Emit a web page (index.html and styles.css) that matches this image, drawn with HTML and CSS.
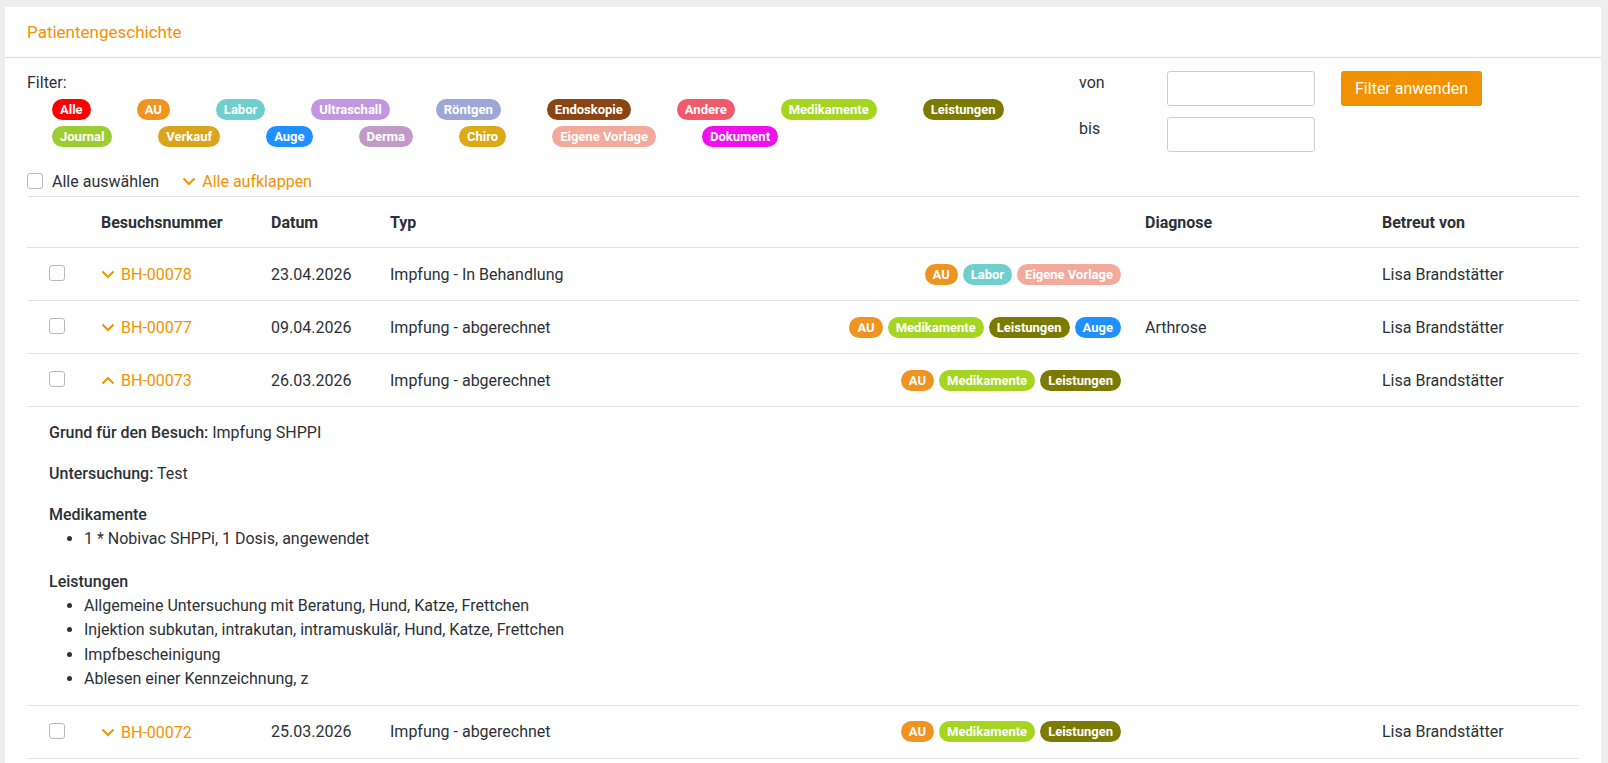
FILE: index.html
```html
<!DOCTYPE html>
<html>
<head>
    <title>Patientengeschichte</title>
    <meta charset="utf-8">
    <link rel="stylesheet" href="styles.css">
</head>
<body>
    <div class="card">
        <div class="card-header">Patientengeschichte</div>
        <div class="card-body">
            <div class="filter">
                <div class="filter-types">
                    <div class="filter-label">Filter:</div>
                    <div class="tag-row">
                        <span class="tag tag-alle">Alle</span>
                        <span class="tag tag-au">AU</span>
                        <span class="tag tag-labor">Labor</span>
                        <span class="tag tag-ultraschall">Ultraschall</span>
                        <span class="tag tag-roentgen">Röntgen</span>
                        <span class="tag tag-endoskopie">Endoskopie</span>
                        <span class="tag tag-andere">Andere</span>
                        <span class="tag tag-medikamente">Medikamente</span>
                        <span class="tag tag-leistungen">Leistungen</span>
                    </div>
                    <div class="tag-row">
                        <span class="tag tag-journal">Journal</span>
                        <span class="tag tag-verkauf">Verkauf</span>
                        <span class="tag tag-auge">Auge</span>
                        <span class="tag tag-derma">Derma</span>
                        <span class="tag tag-chiro">Chiro</span>
                        <span class="tag tag-vorlage">Eigene Vorlage</span>
                        <span class="tag tag-dokument">Dokument</span>
                    </div>
                </div>
                <div class="filter-dates">
                    <label class="date-label">von</label>
                    <input class="date-input" type="text">
                    <button class="btn-filter">Filter anwenden</button>
                    <label class="date-label">bis</label>
                    <input class="date-input" type="text">
                </div>
            </div>

            <div class="toolbar">
                <label class="select-all"><input class="check" type="checkbox"> Alle auswählen</label>
                <a class="expand-all">
                    <svg class="chevron" width="14" height="9" viewBox="0 0 14 9"><polyline points="1.5,1.5 7,7 12.5,1.5"/></svg>
                    Alle aufklappen
                </a>
            </div>

            <table class="history">
                <colgroup>
                    <col style="width: 62px">
                    <col style="width: 170px">
                    <col style="width: 119px">
                    <col style="width: 755px">
                    <col style="width: 237px">
                    <col>
                </colgroup>
                <thead>
                    <tr>
                        <th></th>
                        <th>Besuchsnummer</th>
                        <th>Datum</th>
                        <th>Typ</th>
                        <th>Diagnose</th>
                        <th>Betreut von</th>
                    </tr>
                </thead>
                <tbody>
                    <tr>
                        <td class="cell-check"><input class="check" type="checkbox"></td>
                        <td><a class="visit"><svg class="chevron" width="14" height="9" viewBox="0 0 14 9"><polyline points="1.5,1.5 7,7 12.5,1.5"/></svg>BH-00078</a></td>
                        <td>23.04.2026</td>
                        <td>
                            <div class="typ">
                                <span>Impfung - In Behandlung</span>
                                <span class="tags">
                                    <span class="tag tag-au">AU</span>
                                    <span class="tag tag-labor">Labor</span>
                                    <span class="tag tag-vorlage">Eigene Vorlage</span>
                                </span>
                            </div>
                        </td>
                        <td></td>
                        <td>Lisa Brandstätter</td>
                    </tr>
                    <tr>
                        <td class="cell-check"><input class="check" type="checkbox"></td>
                        <td><a class="visit"><svg class="chevron" width="14" height="9" viewBox="0 0 14 9"><polyline points="1.5,1.5 7,7 12.5,1.5"/></svg>BH-00077</a></td>
                        <td>09.04.2026</td>
                        <td>
                            <div class="typ">
                                <span>Impfung - abgerechnet</span>
                                <span class="tags">
                                    <span class="tag tag-au">AU</span>
                                    <span class="tag tag-medikamente">Medikamente</span>
                                    <span class="tag tag-leistungen">Leistungen</span>
                                    <span class="tag tag-auge">Auge</span>
                                </span>
                            </div>
                        </td>
                        <td>Arthrose</td>
                        <td>Lisa Brandstätter</td>
                    </tr>
                    <tr>
                        <td class="cell-check"><input class="check" type="checkbox"></td>
                        <td><a class="visit"><svg class="chevron" width="14" height="9" viewBox="0 0 14 9"><polyline points="1.5,7.5 7,2 12.5,7.5"/></svg>BH-00073</a></td>
                        <td>26.03.2026</td>
                        <td>
                            <div class="typ">
                                <span>Impfung - abgerechnet</span>
                                <span class="tags">
                                    <span class="tag tag-au">AU</span>
                                    <span class="tag tag-medikamente">Medikamente</span>
                                    <span class="tag tag-leistungen">Leistungen</span>
                                </span>
                            </div>
                        </td>
                        <td></td>
                        <td>Lisa Brandstätter</td>
                    </tr>
                    <tr class="details">
                        <td colspan="6">
                            <p><strong>Grund für den Besuch:</strong> Impfung SHPPI</p>
                            <p><strong>Untersuchung:</strong> Test</p>
                            <strong>Medikamente</strong>
                            <ul>
                                <li>1 * Nobivac SHPPi, 1 Dosis, angewendet</li>
                            </ul>
                            <strong>Leistungen</strong>
                            <ul>
                                <li>Allgemeine Untersuchung mit Beratung, Hund, Katze, Frettchen</li>
                                <li>Injektion subkutan, intrakutan, intramuskulär, Hund, Katze, Frettchen</li>
                                <li>Impfbescheinigung</li>
                                <li>Ablesen einer Kennzeichnung, z</li>
                            </ul>
                        </td>
                    </tr>
                    <tr>
                        <td class="cell-check"><input class="check" type="checkbox"></td>
                        <td><a class="visit"><svg class="chevron" width="14" height="9" viewBox="0 0 14 9"><polyline points="1.5,1.5 7,7 12.5,1.5"/></svg>BH-00072</a></td>
                        <td>25.03.2026</td>
                        <td>
                            <div class="typ">
                                <span>Impfung - abgerechnet</span>
                                <span class="tags">
                                    <span class="tag tag-au">AU</span>
                                    <span class="tag tag-medikamente">Medikamente</span>
                                    <span class="tag tag-leistungen">Leistungen</span>
                                </span>
                            </div>
                        </td>
                        <td></td>
                        <td>Lisa Brandstätter</td>
                    </tr>
                </tbody>
            </table>
        </div>
    </div>
</body>
</html>
```

FILE: styles.css
```css
body{
    margin: 0;
    padding: 7px 7px 0 5px;
    background: #eeeeee;
    font-family: Roboto, "Liberation Sans", sans-serif;
    font-size: 16px;
    color: #2b3137;
}

.card{
    background: #fff;
    min-height: 760px;
}

.card-header{
    height: 50px;
    line-height: 50px;
    padding: 0 22px;
    border-bottom: 1px solid #dcdcdc;
    color: #f39200;
    font-size: 17px;
}

.card-body{
    padding: 0 22px;
}

/* filter */
.filter{
    display: flex;
    padding-top: 13px;
}

.filter-types{
    flex: 1;
}

.filter-label{
    line-height: 24px;
    margin-bottom: 4px;
}

.tag-row{
    display: flex;
    gap: 46px;
    margin-left: 25px;
    margin-bottom: 6px;
}

.tag{
    display: inline-block;
    height: 21px;
    line-height: 21px;
    padding: 0 8px;
    border-radius: 11px;
    color: #fff;
    font-size: 13px;
    font-weight: 700;
    white-space: nowrap;
}

.tag-alle{ background: #ff0000; }
.tag-au{ background: #ef9421; }
.tag-labor{ background: #6fcfcf; }
.tag-ultraschall{ background: #c397e0; }
.tag-roentgen{ background: #9ea8d7; }
.tag-endoskopie{ background: #8b4513; }
.tag-andere{ background: #f05a6a; }
.tag-medikamente{ background: #a4d621; }
.tag-leistungen{ background: #7b7b03; }
.tag-journal{ background: #9acd32; }
.tag-verkauf{ background: #daa51c; }
.tag-auge{ background: #1e90ff; }
.tag-derma{ background: #c19ac8; }
.tag-chiro{ background: #dcaa16; }
.tag-vorlage{ background: #f3a99b; }
.tag-dokument{ background: #ee11ee; }

.filter-dates{
    display: grid;
    grid-template-columns: 88px 148px 141px;
    row-gap: 10px;
    align-items: start;
    margin-right: 123px;
}

.date-label{
    line-height: 24px;
}

.date-input{
    box-sizing: border-box;
    width: 148px;
    height: 35px;
    border: 1px solid #cfcfcf;
    border-radius: 3px;
    margin: 0;
}

.btn-filter{
    margin-left: 26px;
    width: 141px;
    height: 35px;
    border: 0;
    border-radius: 3px;
    background: #f39200;
    color: #fff;
    font-family: inherit;
    font-size: 16px;
}

/* toolbar above the table */
.toolbar{
    display: flex;
    align-items: center;
    height: 24px;
    margin: 16px 0 3px;
}

.select-all{
    display: flex;
    align-items: center;
}

.select-all .check{
    margin-right: 9px;
}

.expand-all{
    display: flex;
    align-items: center;
    margin-left: 23px;
    color: #f39200;
}

.expand-all .chevron{
    margin-right: 6px;
}

.chevron{
    fill: none;
    stroke: #f39200;
    stroke-width: 2;
}

.check{
    -webkit-appearance: none;
    appearance: none;
    box-sizing: border-box;
    width: 16px;
    height: 16px;
    margin: 0;
    border: 1px solid #b9b9b9;
    border-radius: 3px;
    background: #fff;
}

/* history table */
.history{
    width: 100%;
    border-collapse: collapse;
    table-layout: fixed;
}

.history th, .history td{
    height: 50px;
    padding: 0 12px;
    border-top: 1px solid #e3e3e3;
    border-bottom: 1px solid #e3e3e3;
    text-align: left;
    vertical-align: middle;
    white-space: nowrap;
}

.history th{
    font-weight: 700;
}

.history td.cell-check{
    padding-left: 22px;
    padding-top: 2px;
}

.visit{
    display: inline-flex;
    align-items: center;
    color: #f39200;
}

.visit .chevron{
    margin-right: 6px;
}

.typ{
    display: flex;
    align-items: center;
    justify-content: space-between;
}

.tags{
    display: flex;
    gap: 5px;
}

.details td{
    height: auto;
    padding: 14px 22px 13px;
    line-height: 24px;
    white-space: normal;
}

.details strong{
    font-weight: 500;
}

.details p{
    margin: 0 0 17px;
}

.details ul{
    margin: 0 0 18px;
    padding-left: 35px;
}

.details ul:last-child{
    margin-bottom: 0;
}

.details li{
    line-height: 24.5px;
}
```
